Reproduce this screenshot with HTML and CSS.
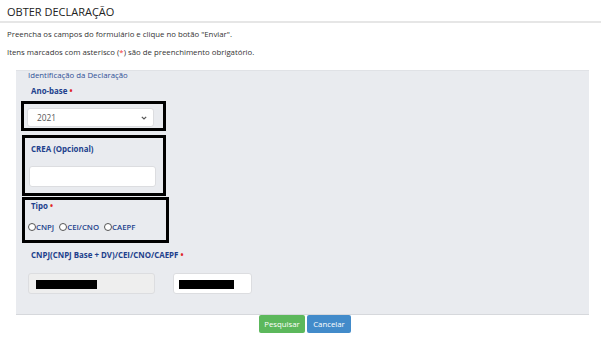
FILE: index.html
```html
<!DOCTYPE html>
<html>

<head>
    <link rel="stylesheet" href="styles.css">
</head>

<body>
    <div class="page">
        <h2 class="title">OBTER DECLARAÇÃO</h2>
        <p class="info">Preencha os campos do formulário e clique no botão "Enviar".</p>
        <p class="info">Itens marcados com asterisco (<span class="req">*</span>) são de preenchimento obrigatório.</p>

        <!-- Form panel -->
        <form class="panel" id="declForm">
            <div class="legend">Identificação da Declaração</div>

            <div class="field-label first">Ano-base <span class="dot">•</span></div>
            <div class="mark mark-ano">
                <div class="select">
                    <span>2021</span>
                    <svg width="6" height="4" viewBox="0 0 6 4">
                        <path d="M0.8 0.8 L3 3 L5.2 0.8" fill="none" stroke="#555" stroke-width="1.2" />
                    </svg>
                </div>
            </div>

            <div class="mark mark-crea">
                <div class="field-label">CREA (Opcional)</div>
                <input type="text" class="text-input wide">
            </div>

            <div class="mark mark-tipo">
                <div class="field-label">Tipo <span class="dot">•</span></div>
                <div class="radios">
                    <label><span class="radio"></span>CNPJ</label>
                    <label><span class="radio"></span>CEI/CNO</label>
                    <label><span class="radio"></span>CAEPF</label>
                </div>
            </div>

            <div class="field-label cnpj-label">CNPJ(CNPJ Base + DV)/CEI/CNO/CAEPF <span class="dot">•</span></div>
            <div class="cnpj-row">
                <div class="text-input wide disabled"><span class="redact r1"></span></div>
                <div class="text-input small"><span class="redact r2"></span></div>
            </div>
        </form>

        <div class="actions">
            <button type="submit" class="btn btn-ok">Pesquisar</button>
            <button type="button" class="btn btn-cancel">Cancelar</button>
        </div>
    </div>
</body>

</html>
```

FILE: styles.css
```css
body {
    font-family: "Open Sans", Arial, sans-serif;
    background-color: #fff;
    margin: 0;
    color: #333;
}

.page {
    width: 601px;
}

.title {
    font-size: 11px;
    font-weight: 400;
    color: #222;
    margin: 0;
    padding: 4px 0 1px 7px;
    border-bottom: 2px solid #e6e6e6;
    line-height: 16px;
}

.info {
    font-size: 7.8px;
    margin: 0 0 0 7px;
    line-height: 18px;
    color: #333;
}

.info:first-of-type {
    margin-top: 2px;
}

.req {
    color: #e33;
}

.panel {
    margin: 9px 0 0 16px;
    width: 573px;
    background-color: #e9ebef;
    border-top: 1px solid #e0e2e6;
    border-bottom: 1px solid #d6d8dc;
    padding: 0 0 20px 0;
    box-sizing: border-box;
}

.legend {
    font-size: 7.8px;
    color: #2f4f96;
    padding-left: 12px;
    line-height: 8px;
}

.field-label {
    font-size: 7.9px;
    font-weight: 700;
    color: #213f8c;
    line-height: 10px;
    padding-left: 15px;
}

.field-label.first {
    margin-top: 7px;
}

.dot {
    color: #e02424;
    font-size: 8px;
    line-height: 8px;
}

.mark {
    border: 3px solid #000;
    box-sizing: border-box;
}

.mark-ano {
    width: 145px;
    height: 30px;
    margin: 5px 0 0 5px;
    padding: 4px 0 0 3px;
}

.select {
    width: 127px;
    height: 19px;
    background-color: #fff;
    border: 1px solid #dcdde0;
    border-radius: 3px;
    box-sizing: border-box;
    display: flex;
    align-items: center;
    justify-content: space-between;
    padding: 0 6px 0 9px;
    font-size: 8.3px;
    color: #555;
}

.mark-crea {
    width: 144px;
    height: 61px;
    margin: 4px 0 0 6px;
    padding-top: 6px;
}

.mark-crea .field-label {
    padding-left: 6px;
}

.text-input {
    display: block;
    height: 21px;
    background-color: #fff;
    border: 1px solid #dcdde0;
    border-radius: 3px;
    box-sizing: border-box;
    margin: 0;
    padding: 0;
}

.mark-crea .text-input {
    width: 127px;
    margin: 12px 0 0 4px;
}

.mark-tipo {
    width: 147px;
    height: 46px;
    margin: 1px 0 0 6px;
    padding-top: 1px;
}

.mark-tipo .field-label {
    padding-left: 6px;
}

.radios {
    display: flex;
    gap: 5px;
    margin: 11px 0 0 3px;
    font-size: 7.8px;
    font-weight: 600;
    color: #213f8c;
    line-height: 10px;
}

.radios label {
    display: flex;
    align-items: center;
}

.radio {
    width: 6px;
    height: 6px;
    border: 1px solid #555;
    border-radius: 50%;
    background-color: #fff;
    margin-right: 0;
}

.cnpj-label {
    margin-top: 7px;
}

.cnpj-row {
    display: flex;
    gap: 18px;
    margin: 13px 0 0 12px;
}

.text-input.wide {
    width: 127px;
}

.text-input.small {
    width: 79px;
    padding: 6px 0 0 5px;
}

.text-input.disabled {
    background-color: #eeeeee;
    padding: 6px 0 0 7px;
}

.redact {
    display: block;
    height: 9px;
    background-color: #000;
}

.r1 {
    width: 61px;
}

.r2 {
    width: 55px;
}

.actions {
    display: flex;
    justify-content: center;
    gap: 2px;
    padding-left: 9px;
    margin-top: 0;
}

.btn {
    font-family: "Open Sans", Arial, sans-serif;
    font-size: 7.8px;
    color: #fff;
    border: none;
    border-radius: 2px;
    height: 18px;
    padding: 0 4px;
    cursor: pointer;
}

.btn-ok {
    background-color: #5cb85c;
    width: 46px;
}

.btn-cancel {
    background-color: #428bca;
    width: 44px;
}
```
